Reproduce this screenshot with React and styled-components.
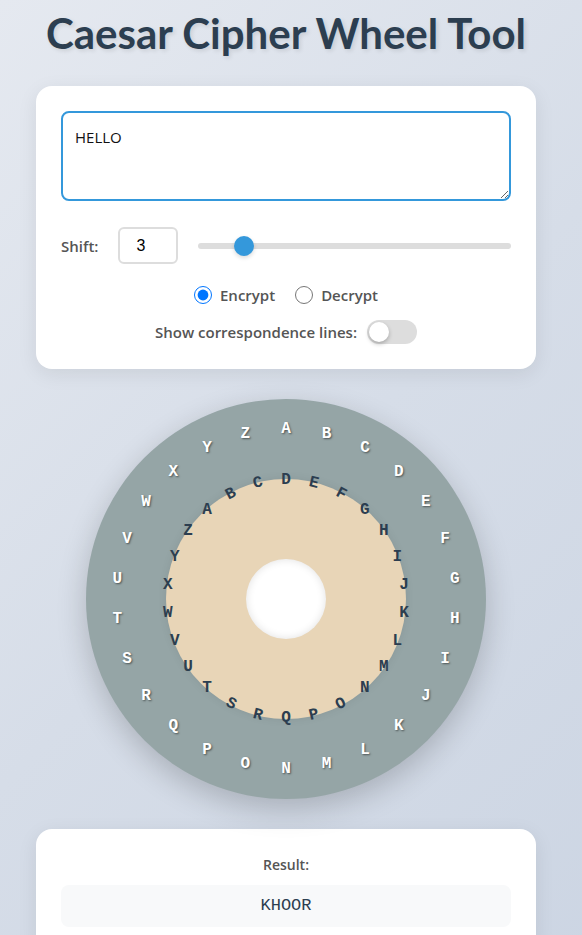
import React, {useState} from 'react';
import styled, {createGlobalStyle} from 'styled-components';

const ALPHABET = 'ABCDEFGHIJKLMNOPQRSTUVWXYZ'.split('');

const GlobalStyle = createGlobalStyle`
    html, body {
        margin: 0;
        padding: 0;
    }
    body {
        min-height: 100vh;
        background: linear-gradient(135deg, #e5e9f0 0%, #d6dde8 50%, #ccd5e3 100%);
        font-family: "Segoe UI", "Open Sans", "Noto Sans", sans-serif;
        color: #333;
    }
`;

const Page = styled.div`
    display: flex;
    flex-direction: column;
    align-items: center;
    padding: 0 20px 40px 10px;
`;
const Title = styled.h1`
    margin: 6px 0 0;
    font-family: Lato, "Open Sans", sans-serif;
    font-size: 42px;
    font-weight: 700;
    color: #2c3e50;
    text-shadow: 2px 2px 4px rgba(0,0,0,0.1);
    text-align: center;
    line-height: 54px;
`;
const Card = styled.div`
    box-sizing: border-box;
    width: 500px;
    margin-top: ${props => props.top || 0}px;
    padding: 25px;
    background: #fff;
    border-radius: 16px;
    box-shadow: 0 5px 20px rgba(0,0,0,0.08);
    display: flex;
    flex-direction: column;
`;
const TextArea = styled.textarea`
    box-sizing: border-box;
    width: 100%;
    height: 90px;
    padding: 12px;
    border: 2px solid #3498db;
    border-radius: 8px;
    font-family: "Segoe UI", "Open Sans", sans-serif;
    font-size: 15px;
    line-height: 24px;
    color: #111;
    outline: none;
`;
const ShiftRow = styled.div`
    display: flex;
    align-items: center;
    gap: 20px;
    margin-top: 26px;
`;
const Label = styled.label`
    font-size: 15px;
    font-weight: 600;
    color: #555;
`;
const NumberInput = styled.input`
    box-sizing: border-box;
    width: 60px;
    height: 37px;
    padding: 8px;
    border: 2px solid #ddd;
    border-radius: 6px;
    font-family: "Liberation Sans", Arial, sans-serif;
    font-size: 16px;
    text-align: center;
    color: #000;
    outline: none;
`;
const Slider = styled.input`
    flex: 1;
    margin: 0;
    height: 20px;
    appearance: none;
    background: transparent;
    &::-webkit-slider-runnable-track {
        height: 6px;
        border-radius: 3px;
        background: #ddd;
    }
    &::-webkit-slider-thumb {
        appearance: none;
        width: 20px;
        height: 20px;
        margin-top: -7px;
        border-radius: 50%;
        background: #3498db;
        box-shadow: 0 2px 4px rgba(0,0,0,0.15);
    }
`;
const ModeRow = styled.div`
    display: flex;
    justify-content: center;
    align-items: center;
    gap: 20px;
    margin-top: 21px;
`;
const RadioLabel = styled.label`
    display: flex;
    align-items: center;
    gap: 8px;
    font-size: 15px;
    font-weight: 600;
    color: #555;
`;
const Radio = styled.input`
    width: 18px;
    height: 18px;
    margin: 0;
`;
const ToggleRow = styled.div`
    display: flex;
    justify-content: center;
    align-items: center;
    gap: 10px;
    margin-top: 15px;
`;
const Toggle = styled.div`
    position: relative;
    width: 50px;
    height: 24px;
    border-radius: 12px;
    background: ${props => props.on ? '#3498db' : '#ddd'};
    cursor: pointer;
`;
const Knob = styled.div`
    position: absolute;
    top: 2px;
    left: ${props => props.on ? '28px' : '2px'};
    width: 20px;
    height: 20px;
    border-radius: 50%;
    background: #fff;
    box-shadow: 0 2px 4px rgba(0,0,0,0.25);
`;
const Wheel = styled.div`
    position: relative;
    margin-top: 30px;
    width: 400px;
    height: 400px;
    border-radius: 50%;
    background: #95a5a6;
    box-shadow: 0 10px 30px rgba(0,0,0,0.2);
    display: flex;
    justify-content: center;
    align-items: center;
`;
const InnerDisc = styled.div`
    width: 240px;
    height: 240px;
    border-radius: 50%;
    background: #e8d5b7;
    box-shadow: 0 0 10px rgba(0,0,0,0.08);
    display: flex;
    justify-content: center;
    align-items: center;
`;
const Hole = styled.div`
    width: 80px;
    height: 80px;
    border-radius: 50%;
    background: #fff;
    box-shadow: inset 0 0 8px rgba(0,0,0,0.12);
`;
const Letter = styled.span`
    position: absolute;
    width: 20px;
    height: 20px;
    margin: -10px 0 0 -10px;
    display: flex;
    justify-content: center;
    align-items: center;
    font-family: "Liberation Mono", "Courier New", monospace;
    font-size: 16px;
    font-weight: 700;
    color: ${props => props.inner ? '#2c3e50' : '#fff'};
    text-shadow: ${props => props.inner ? 'none' : '1px 1px 2px rgba(0,0,0,0.5)'};
`;
const ResultLabel = styled.div`
    text-align: center;
    font-size: 14px;
    font-weight: 600;
    color: #555;
    line-height: 22px;
`;
const ResultBox = styled.div`
    margin-top: 9px;
    padding: 11px;
    border-radius: 8px;
    background: #f8f9fa;
    text-align: center;
    font-family: "Liberation Mono", "Courier New", monospace;
    font-size: 17px;
    font-weight: 400;
    line-height: 20px;
    color: #2c3e50;
`;

const caesar = (text, shift) =>
    text.replace(/[A-Z]/gi, ch => {
        const base = ch <= 'Z' ? 65 : 97;
        return String.fromCharCode(((ch.charCodeAt(0) - base + shift + 26) % 26) + base);
    });

// inner letters lean with the ring close to top and bottom, stay upright elsewhere
const tilt = (deg) => {
    const d = deg > 180 ? deg - 360 : deg;
    if (Math.abs(d) <= 30) return d;
    if (Math.abs(d) >= 150) return d > 0 ? d - 180 : d + 180;
    return 0;
};

const App = () => {
    const [Text, setText] = useState('HELLO');
    const [Shift, setShift] = useState(3);
    const [Mode, setMode] = useState('encrypt');
    const [Lines, setLines] = useState(false);

    const step = 360 / 26;
    const center = 200;
    const result = caesar(Text, Mode === 'encrypt' ? Shift : -Shift);

    return (
        <>
            <GlobalStyle />
            <Page>
                <Title>Caesar Cipher Wheel Tool</Title>
                <Card top={26}>
                    <TextArea value={Text} onChange={(e) => setText(e.target.value)} autoFocus />
                    <ShiftRow>
                        <Label>Shift:</Label>
                        <NumberInput type="number" min="0" max="25" value={Shift}
                            onChange={(e) => setShift(Number(e.target.value) || 0)} />
                        <Slider type="range" min="0" max="25" value={Shift}
                            onChange={(e) => setShift(Number(e.target.value))} />
                    </ShiftRow>
                    <ModeRow>
                        <RadioLabel>
                            <Radio type="radio" name="mode" checked={Mode === 'encrypt'} onChange={() => setMode('encrypt')} />
                            Encrypt
                        </RadioLabel>
                        <RadioLabel>
                            <Radio type="radio" name="mode" checked={Mode === 'decrypt'} onChange={() => setMode('decrypt')} />
                            Decrypt
                        </RadioLabel>
                    </ModeRow>
                    <ToggleRow>
                        <Label>Show correspondence lines:</Label>
                        <Toggle on={Lines ? 1 : 0} onClick={() => setLines(!Lines)}>
                            <Knob on={Lines ? 1 : 0} />
                        </Toggle>
                    </ToggleRow>
                </Card>
                <Wheel>
                    {ALPHABET.map((ch, i) => {
                        const a = (i * step) * Math.PI / 180;
                        return (
                            <Letter key={'o' + ch} style={{left: center + 170 * Math.sin(a), top: center - 170 * Math.cos(a)}}>
                                {ch}
                            </Letter>
                        );
                    })}
                    <InnerDisc>
                        <Hole />
                    </InnerDisc>
                    {ALPHABET.map((_, i) => {
                        const ch = ALPHABET[(i + Shift) % 26];
                        const deg = i * step;
                        const a = deg * Math.PI / 180;
                        return (
                            <Letter inner key={'i' + ch}
                                style={{left: center + 119 * Math.sin(a), top: center - 119 * Math.cos(a), transform: `rotate(${tilt(deg)}deg)`}}>
                                {ch}
                            </Letter>
                        );
                    })}
                </Wheel>
                <Card top={30}>
                    <ResultLabel>Result:</ResultLabel>
                    <ResultBox>{result}</ResultBox>
                </Card>
            </Page>
        </>
    );
};

export default App;
